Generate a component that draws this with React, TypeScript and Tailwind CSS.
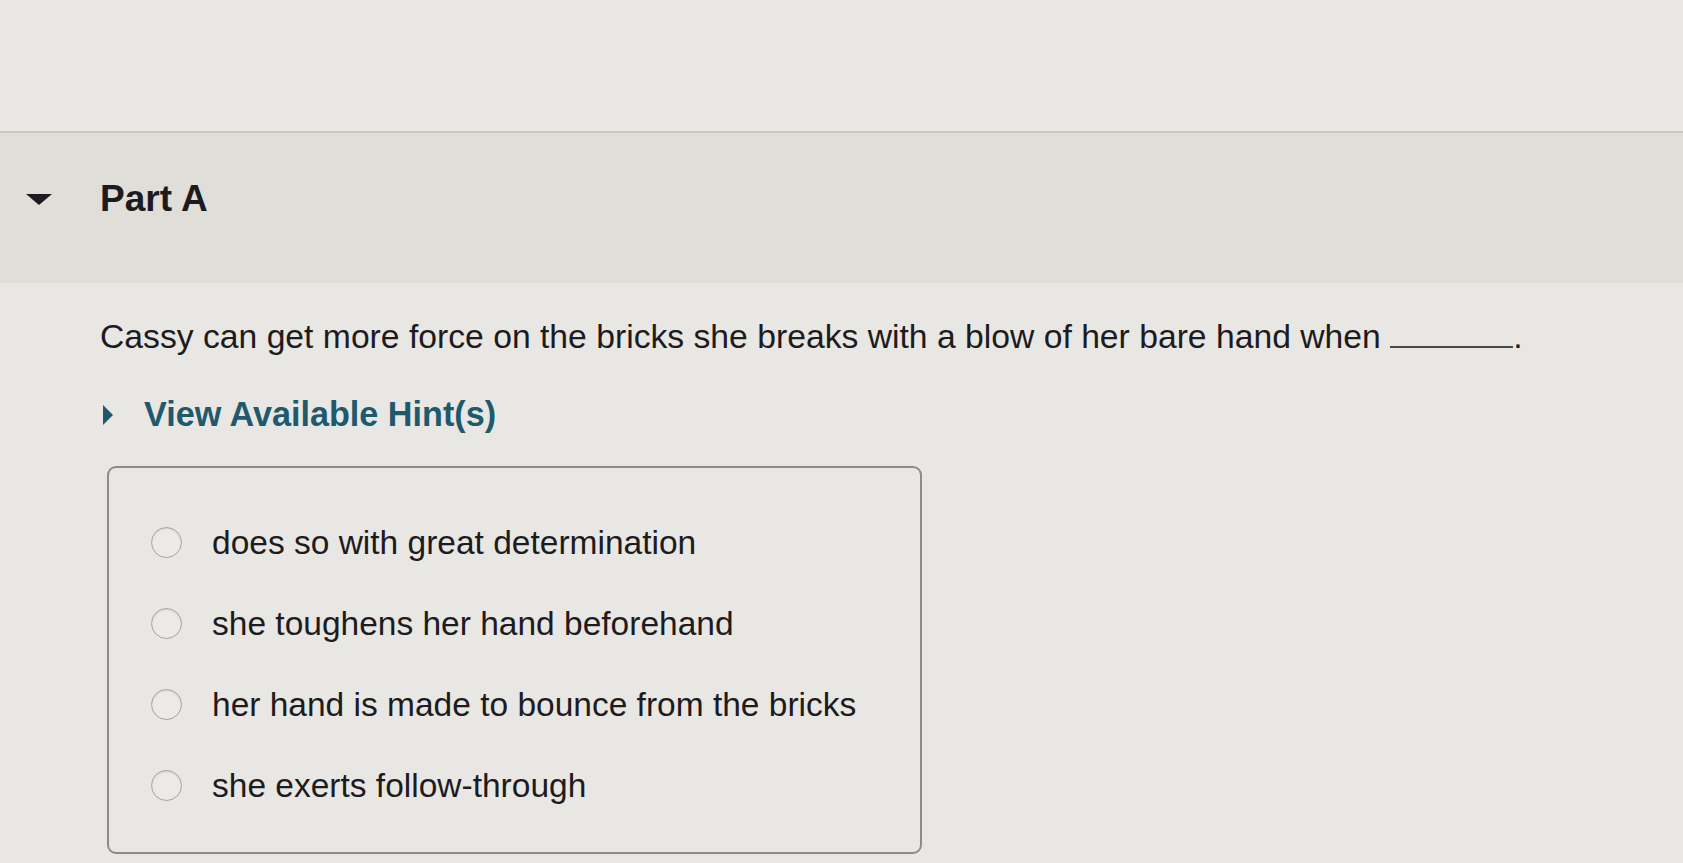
const options = [
  "does so with great determination",
  "she toughens her hand beforehand",
  "her hand is made to bounce from the bricks",
  "she exerts follow-through",
];

export default function App() {
  return (
    <div className="w-full h-[863px] overflow-hidden bg-[#e8e7e3] text-[#1d1b20] font-['Liberation_Sans',Arial,sans-serif]">
      {/* top strip */}
      <div className="h-[133px] bg-[#e9e8e4] border-b-2 border-[#c9c8c3]" />

      {/* part header */}
      <div className="h-[150px] bg-[#dfded9] flex items-start pt-[46px]">
        <div className="w-[100px] flex items-center h-[40px] pl-[26px]">
          <svg width="26" height="11" viewBox="0 0 26 11">
            <polygon points="0,0 26,0 13,11" fill="#1d1b20" />
          </svg>
        </div>
        <h2 className="text-[37px] leading-[40px] font-bold">Part A</h2>
      </div>

      {/* content */}
      <div className="pl-[100px] pt-[33px]">
        <p className="text-[33.7px] leading-[40px] whitespace-nowrap">
          Cassy can get more force on the bricks she breaks with a blow of her bare hand when{" "}
          <span className="inline-block w-[123px] h-[28px] border-b-2 border-[#4a484c] align-baseline" />.
        </p>

        <div className="mt-[39px] flex items-center h-[40px]">
          <svg width="10" height="20" viewBox="0 0 10 20" className="ml-[3px]">
            <polygon points="0,0 10,10 0,20" fill="#1e5a6c" />
          </svg>
          <span className="ml-[31px] text-[34.2px] font-bold text-[#1e5a6c]">View Available Hint(s)</span>
        </div>

        <div className="mt-[31px] ml-[7px] w-[815px] h-[388px] rounded-[9px] border-2 border-[#8d8b8d] pt-[34px]">
          {options.map((o) => (
            <label key={o} className="flex items-center h-[81px] pl-[42px]">
              <span className="w-[31px] h-[31px] rounded-full border-[1.5px] border-[#a5a4a0] bg-[#ebeae6] shadow-[inset_0_1px_2px_rgba(0,0,0,0.1)]" />
              <span className="ml-[30px] text-[33.5px] leading-[40px] whitespace-nowrap">{o}</span>
            </label>
          ))}
        </div>
      </div>
    </div>
  );
}
